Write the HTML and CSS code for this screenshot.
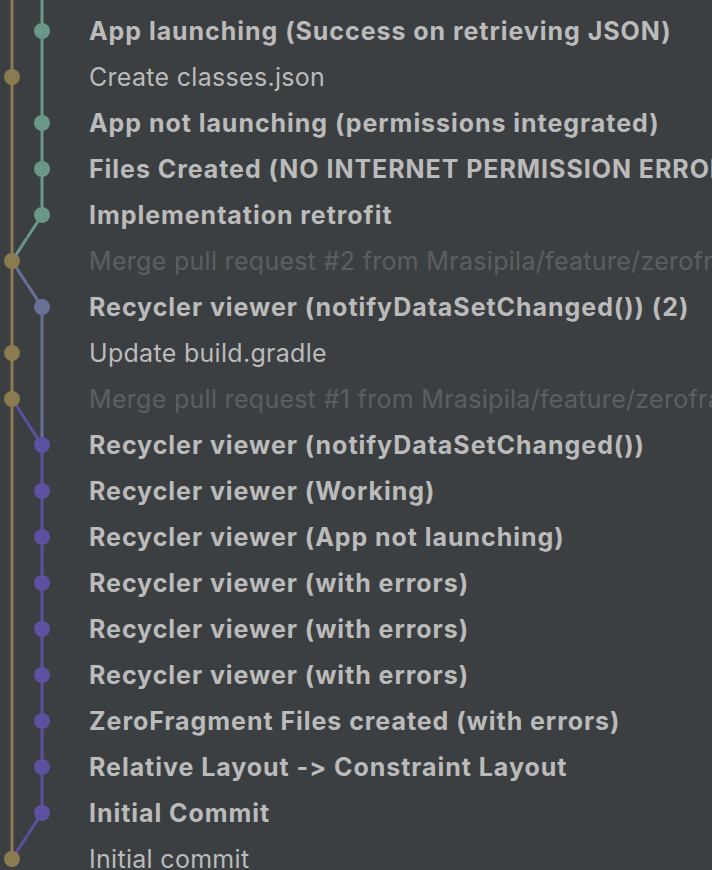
FILE: index.html
```html
<!DOCTYPE html>
<html>
<head>
<meta charset="utf-8">
<link rel="stylesheet" href="styles.css">
</head>
<body>
<div class="log">
  <div class="row top">
    <svg class="graph" width="89" height="8"><line class="l gold" x1="12" y1="0" x2="12" y2="8"/><line class="l teal" x1="42" y1="0" x2="42" y2="8"/></svg>
  </div>
  <div class="row">
    <svg class="graph" width="89" height="46"><line class="l gold" x1="12" y1="0" x2="12" y2="46"/><line class="l teal" x1="42" y1="0" x2="42" y2="46"/><circle class="teal-f" cx="42" cy="23" r="8"/></svg>
    <span class="msg b">App launching (Success on retrieving JSON)</span>
  </div>
  <div class="row">
    <svg class="graph" width="89" height="46"><line class="l gold" x1="12" y1="0" x2="12" y2="46"/><line class="l teal" x1="42" y1="0" x2="42" y2="46"/><circle class="gold-f" cx="12" cy="23" r="8"/></svg>
    <span class="msg">Create classes.json</span>
  </div>
  <div class="row">
    <svg class="graph" width="89" height="46"><line class="l gold" x1="12" y1="0" x2="12" y2="46"/><line class="l teal" x1="42" y1="0" x2="42" y2="46"/><circle class="teal-f" cx="42" cy="23" r="8"/></svg>
    <span class="msg b">App not launching (permissions integrated)</span>
  </div>
  <div class="row">
    <svg class="graph" width="89" height="46"><line class="l gold" x1="12" y1="0" x2="12" y2="46"/><line class="l teal" x1="42" y1="0" x2="42" y2="46"/><circle class="teal-f" cx="42" cy="23" r="8"/></svg>
    <span class="msg b">Files Created (NO INTERNET PERMISSION ERROR)</span>
  </div>
  <div class="row">
    <svg class="graph" width="89" height="46"><line class="l gold" x1="12" y1="0" x2="12" y2="46"/><line class="l teal" x1="42" y1="0" x2="42" y2="23"/><line class="l teal" x1="42" y1="23" x2="27" y2="46"/><circle class="teal-f" cx="42" cy="23" r="8"/></svg>
    <span class="msg b">Implementation retrofit</span>
  </div>
  <div class="row">
    <svg class="graph" width="89" height="46"><line class="l gold" x1="12" y1="0" x2="12" y2="46"/><line class="l teal" x1="27" y1="0" x2="12" y2="23"/><line class="l blue" x1="12" y1="23" x2="27" y2="46"/><circle class="gold-f" cx="12" cy="23" r="8"/></svg>
    <span class="msg dim">Merge pull request #2 from Mrasipila/feature/zerofragment</span>
  </div>
  <div class="row">
    <svg class="graph" width="89" height="46"><line class="l gold" x1="12" y1="0" x2="12" y2="46"/><line class="l blue" x1="27" y1="0" x2="42" y2="23"/><line class="l blue" x1="42" y1="23" x2="42" y2="46"/><circle class="blue-f" cx="42" cy="23" r="8"/></svg>
    <span class="msg b">Recycler viewer (notifyDataSetChanged()) (2)</span>
  </div>
  <div class="row">
    <svg class="graph" width="89" height="46"><line class="l gold" x1="12" y1="0" x2="12" y2="46"/><line class="l blue" x1="42" y1="0" x2="42" y2="46"/><circle class="gold-f" cx="12" cy="23" r="8"/></svg>
    <span class="msg">Update build.gradle</span>
  </div>
  <div class="row">
    <svg class="graph" width="89" height="46"><line class="l gold" x1="12" y1="0" x2="12" y2="46"/><line class="l blue" x1="42" y1="0" x2="42" y2="46"/><line class="l purple" x1="12" y1="23" x2="27" y2="46"/><circle class="gold-f" cx="12" cy="23" r="8"/></svg>
    <span class="msg dim">Merge pull request #1 from Mrasipila/feature/zerofragment</span>
  </div>
  <div class="row">
    <svg class="graph" width="89" height="46"><line class="l gold" x1="12" y1="0" x2="12" y2="46"/><line class="l blue" x1="42" y1="0" x2="42" y2="23"/><line class="l purple" x1="27" y1="0" x2="42" y2="23"/><line class="l purple" x1="42" y1="23" x2="42" y2="46"/><circle class="purple-f" cx="42" cy="23" r="8"/></svg>
    <span class="msg b">Recycler viewer (notifyDataSetChanged())</span>
  </div>
  <div class="row">
    <svg class="graph" width="89" height="46"><line class="l gold" x1="12" y1="0" x2="12" y2="46"/><line class="l purple" x1="42" y1="0" x2="42" y2="46"/><circle class="purple-f" cx="42" cy="23" r="8"/></svg>
    <span class="msg b">Recycler viewer (Working)</span>
  </div>
  <div class="row">
    <svg class="graph" width="89" height="46"><line class="l gold" x1="12" y1="0" x2="12" y2="46"/><line class="l purple" x1="42" y1="0" x2="42" y2="46"/><circle class="purple-f" cx="42" cy="23" r="8"/></svg>
    <span class="msg b">Recycler viewer (App not launching)</span>
  </div>
  <div class="row">
    <svg class="graph" width="89" height="46"><line class="l gold" x1="12" y1="0" x2="12" y2="46"/><line class="l purple" x1="42" y1="0" x2="42" y2="46"/><circle class="purple-f" cx="42" cy="23" r="8"/></svg>
    <span class="msg b">Recycler viewer (with errors)</span>
  </div>
  <div class="row">
    <svg class="graph" width="89" height="46"><line class="l gold" x1="12" y1="0" x2="12" y2="46"/><line class="l purple" x1="42" y1="0" x2="42" y2="46"/><circle class="purple-f" cx="42" cy="23" r="8"/></svg>
    <span class="msg b">Recycler viewer (with errors)</span>
  </div>
  <div class="row">
    <svg class="graph" width="89" height="46"><line class="l gold" x1="12" y1="0" x2="12" y2="46"/><line class="l purple" x1="42" y1="0" x2="42" y2="46"/><circle class="purple-f" cx="42" cy="23" r="8"/></svg>
    <span class="msg b">Recycler viewer (with errors)</span>
  </div>
  <div class="row">
    <svg class="graph" width="89" height="46"><line class="l gold" x1="12" y1="0" x2="12" y2="46"/><line class="l purple" x1="42" y1="0" x2="42" y2="46"/><circle class="purple-f" cx="42" cy="23" r="8"/></svg>
    <span class="msg b">ZeroFragment Files created (with errors)</span>
  </div>
  <div class="row">
    <svg class="graph" width="89" height="46"><line class="l gold" x1="12" y1="0" x2="12" y2="46"/><line class="l purple" x1="42" y1="0" x2="42" y2="46"/><circle class="purple-f" cx="42" cy="23" r="8"/></svg>
    <span class="msg b">Relative Layout -&gt; Constraint Layout</span>
  </div>
  <div class="row">
    <svg class="graph" width="89" height="46"><line class="l gold" x1="12" y1="0" x2="12" y2="46"/><line class="l purple" x1="42" y1="0" x2="42" y2="23"/><line class="l purple" x1="42" y1="23" x2="27" y2="46"/><circle class="purple-f" cx="42" cy="23" r="8"/></svg>
    <span class="msg b">Initial Commit</span>
  </div>
  <div class="row">
    <svg class="graph" width="89" height="46"><line class="l gold" x1="12" y1="0" x2="12" y2="23"/><line class="l purple" x1="27" y1="0" x2="12" y2="23"/><circle class="gold-f" cx="12" cy="23" r="8"/></svg>
    <span class="msg">Initial commit</span>
  </div>
</div>
</body>
</html>
```
FILE: styles.css
```css
html, body {
  margin: 0;
  padding: 0;
  background: #3c3f41;
  overflow: hidden;
}
.log {
  display: flex;
  flex-direction: column;
  width: 712px;
  height: 870px;
  overflow: hidden;
}
.row {
  display: flex;
  align-items: center;
  height: 46px;
  flex: 0 0 46px;
  overflow: hidden;
}
.row.top {
  height: 8px;
  flex: 0 0 8px;
}
.graph {
  flex: 0 0 89px;
  display: block;
}
.l {
  stroke-width: 3;
  stroke-linecap: butt;
}
.gold { stroke: #8c7a51; }
.teal { stroke: #6a978a; }
.blue { stroke: #6a7196; }
.purple { stroke: #5c51a1; }
.gold-f { fill: #8c7a51; }
.teal-f { fill: #6a978a; }
.blue-f { fill: #6a7196; }
.purple-f { fill: #5c51a1; }
.msg {
  font-family: "Inter", "Liberation Sans", sans-serif;
  font-size: 25px;
  letter-spacing: 0.3px;
  color: #bbbbbb;
  white-space: nowrap;
  line-height: 46px;
  font-feature-settings: "calt" 0, "liga" 0;
  font-variant-ligatures: none;
}
.msg.b {
  font-weight: 700;
  letter-spacing: 0.95px;
}
.msg.dim { color: #5c5f61; }
```
